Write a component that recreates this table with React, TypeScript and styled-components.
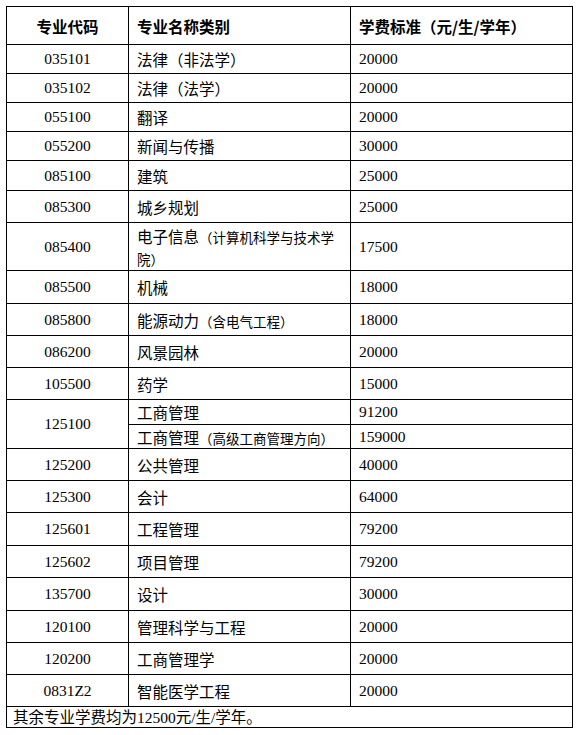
import styled, { createGlobalStyle } from "styled-components";

const GlobalStyle = createGlobalStyle`
  body {
    margin: 0;
    background: #fff;
  }
`;

type FeeRow = {
  code: string;
  name: string;
  note?: string;
  fee: string;
  h: number;
};

// 125100 有两个方向，单独处理
const rowsTop: FeeRow[] = [
  { code: "035101", name: "法律（非法学）", fee: "20000", h: 29 },
  { code: "035102", name: "法律（法学）", fee: "20000", h: 29 },
  { code: "055100", name: "翻译", fee: "20000", h: 29 },
  { code: "055200", name: "新闻与传播", fee: "30000", h: 29 },
  { code: "085100", name: "建筑", fee: "25000", h: 30 },
  { code: "085300", name: "城乡规划", fee: "25000", h: 32 },
  { code: "085400", name: "电子信息", note: "（计算机科学与技术学院）", fee: "17500", h: 48 },
  { code: "085500", name: "机械", fee: "18000", h: 33 },
  { code: "085800", name: "能源动力", note: "（含电气工程）", fee: "18000", h: 32 },
  { code: "086200", name: "风景园林", fee: "20000", h: 32 },
  { code: "105500", name: "药学", fee: "15000", h: 32 },
];

const rowsBottom: FeeRow[] = [
  { code: "125200", name: "公共管理", fee: "40000", h: 32 },
  { code: "125300", name: "会计", fee: "64000", h: 32 },
  { code: "125601", name: "工程管理", fee: "79200", h: 33 },
  { code: "125602", name: "项目管理", fee: "79200", h: 32 },
  { code: "135700", name: "设计", fee: "30000", h: 33 },
  { code: "120100", name: "管理科学与工程", fee: "20000", h: 32 },
  { code: "120200", name: "工商管理学", fee: "20000", h: 32 },
  { code: "0831Z2", name: "智能医学工程", fee: "20000", h: 32 },
];

const Page = styled.div`
  padding: 6px 0 0 6px;
`;

const Table = styled.table`
  border-collapse: collapse;
  table-layout: fixed;
  width: 566px;
  color: #000;
`;

const Row = styled.tr<{ $h: number }>`
  height: ${(p) => p.$h}px;
`;

const HeadCell = styled.th<{ $center?: boolean }>`
  border: 1px solid #000;
  padding: 0 8px;
  font-family: "Noto Sans CJK SC", sans-serif;
  font-size: 15.5px;
  font-weight: bold;
  line-height: 20px;
  text-align: ${(p) => (p.$center ? "center" : "left")};
  vertical-align: middle;
`;

const CodeCell = styled.td`
  border: 1px solid #000;
  padding: 0 6px;
  font-family: "Liberation Serif", serif;
  font-size: 15.5px;
  line-height: 18px;
  text-align: center;
  vertical-align: middle;
`;

const NameCell = styled.td`
  border: 1px solid #000;
  padding: 0 8px;
  font-family: "Noto Sans CJK SC", sans-serif;
  font-size: 15.5px;
  line-height: 22px;
  vertical-align: middle;
`;

const Note = styled.span`
  font-size: 13.5px;
  line-height: 1;
`;

const FeeCell = styled.td`
  border: 1px solid #000;
  padding: 0 8px;
  font-family: "Liberation Serif", serif;
  font-size: 15.5px;
  line-height: 18px;
  vertical-align: middle;
`;

const FootCell = styled.td`
  border: 1px solid #000;
  padding: 1px 6px 0;
  font-family: "Liberation Serif", "Noto Sans CJK SC", serif;
  font-size: 15.5px;
  line-height: 1;
  vertical-align: middle;
`;

function FeeLine({ row }: { row: FeeRow }) {
  return (
    <Row $h={row.h}>
      <CodeCell>{row.code}</CodeCell>
      <NameCell>
        {row.name}
        {row.note && <Note>{row.note}</Note>}
      </NameCell>
      <FeeCell>{row.fee}</FeeCell>
    </Row>
  );
}

export default function App() {
  return (
    <Page>
      <GlobalStyle />
      <Table>
        <colgroup>
          <col style={{ width: 122 }} />
          <col style={{ width: 222 }} />
          <col style={{ width: 222 }} />
        </colgroup>
        <tbody>
          <Row $h={38}>
            <HeadCell $center>专业代码</HeadCell>
            <HeadCell>专业名称类别</HeadCell>
            <HeadCell>学费标准（元/生/学年）</HeadCell>
          </Row>
          {rowsTop.map((r) => (
            <FeeLine key={r.code} row={r} />
          ))}
          <Row $h={25}>
            <CodeCell rowSpan={2}>125100</CodeCell>
            <NameCell>工商管理</NameCell>
            <FeeCell>91200</FeeCell>
          </Row>
          <Row $h={24}>
            <NameCell>
              工商管理<Note>（高级工商管理方向）</Note>
            </NameCell>
            <FeeCell>159000</FeeCell>
          </Row>
          {rowsBottom.map((r) => (
            <FeeLine key={r.code} row={r} />
          ))}
          <Row $h={21}>
            <FootCell colSpan={3}>其余专业学费均为12500元/生/学年。</FootCell>
          </Row>
        </tbody>
      </Table>
    </Page>
  );
}
